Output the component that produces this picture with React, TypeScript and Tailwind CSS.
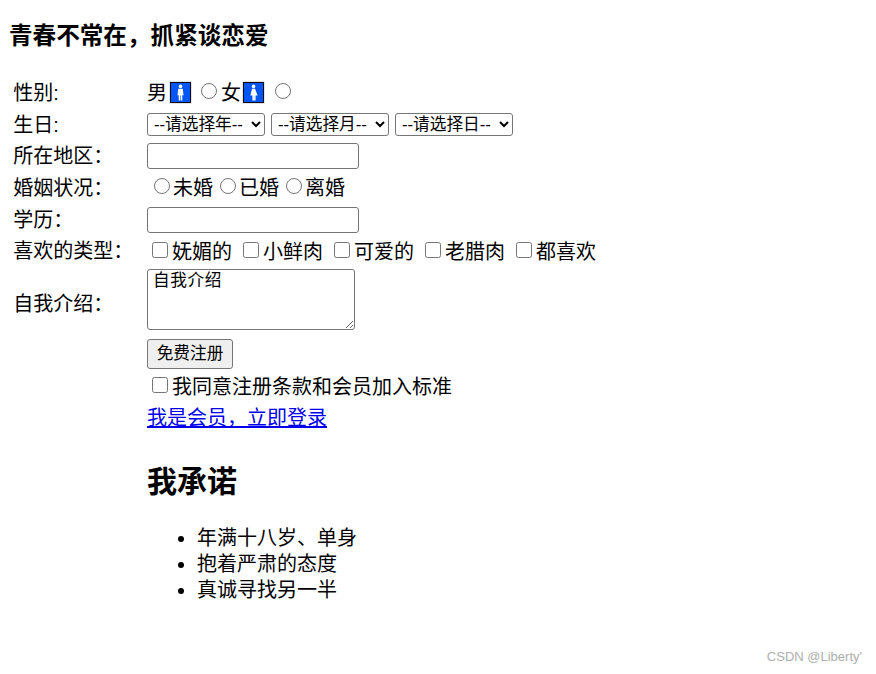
import React from 'react';

const inputClass = "h-[26px] w-[212px] rounded-[3px] border border-[#767676] bg-white px-[3px] text-[16.67px]";
const selectClass = "h-[23px] w-[118px] rounded-[3px] border border-[#767676] bg-white pl-[2px] text-[16.67px] leading-[20px]";
const radioClass = "ml-[7px] mr-[3px] h-4 w-4 align-[1px]";
const checkClass = "ml-[5px] mr-[4px] h-4 w-4 align-[1px]";

const GenderIcon = ({ woman }: { woman?: boolean }) => (
  <svg width="23" height="23" viewBox="0 0 23 23" className="inline-block align-[-4px]">
    <rect x="0.5" y="0.5" width="22" height="22" fill="#c8c8c8" />
    <rect x="1" y="1" width="21" height="21" fill="#0a0a14" />
    <rect x="2" y="2" width="19" height="19" fill="#0455f5" />
    <circle cx="11.5" cy="5.4" r="1.8" fill="#fff" />
    {woman ? (
      <path d="M10 7.8h3l2.6 6.7h-2v4.9h-1.5v-4.9h-.2v4.9h-1.5v-4.9h-2z" fill="#fff" />
    ) : (
      <path d="M9.2 7.8h4.6l.7 6.4h-1.2v5.2h-1.5v-5h-.6v5H9.7v-5.2H8.5z" fill="#fff" />
    )}
  </svg>
);

const Row = ({ label, labelClass, children }: { label?: string; labelClass?: string; children: React.ReactNode }) => (
  <tr>
    <td className={`w-[131.75px] p-[1.25px] align-middle ${labelClass ?? ''}`}>{label}</td>
    <td className="p-[1.25px] align-middle">{children}</td>
  </tr>
);

const likes = ['妩媚的', '小鲜肉', '可爱的', '老腊肉', '都喜欢'];
const promises = ['年满十八岁、单身', '抱着严肃的态度', '真诚寻找另一半'];

export default function App() {
  return (
    <div className="flex h-[674px] flex-col bg-white font-['Liberation_Sans','Noto_Sans_CJK_SC',sans-serif] text-[20px] leading-[26px] text-black">
      <h3 className="ml-[9px] mt-[21px] text-[23.6px] font-bold leading-[30px]">{'青春不常在\uFF0C抓紧谈恋爱'}</h3>
      <table className="ml-[10px] mt-[25px] border-separate border-spacing-[2.5px]">
        <tbody>
          <Row label="性别:">
            <div className="h-[27px] whitespace-nowrap pt-[1px]">
              男<span className="ml-[2px]"><GenderIcon /></span>
              <input type="radio" name="sex" className="ml-[9px] mr-[4px] h-4 w-4 align-[1px]" />
              女<span className="ml-[1px]"><GenderIcon woman /></span>
              <input type="radio" name="sex" className="ml-[10px] h-4 w-4 align-[1px]" />
            </div>
          </Row>
          <Row label="生日:" labelClass="pt-[2px]">
            <div className="flex h-[27px] items-center gap-[6px]">
              <select className={selectClass}><option>--请选择年--</option></select>
              <select className={selectClass}><option>--请选择月--</option></select>
              <select className={selectClass}><option>--请选择日--</option></select>
            </div>
          </Row>
          <Row label={'所在地区\uFF1A'} labelClass="pt-[2px]">
            <div className="flex h-[27px] items-center">
              <input type="text" className={inputClass} />
            </div>
          </Row>
          <Row label={'婚姻状况\uFF1A'}>
            <div className="h-[28px] whitespace-nowrap pt-[1px]">
              <input type="radio" name="marry" className={radioClass} />未婚
              <input type="radio" name="marry" className={radioClass} />已婚
              <input type="radio" name="marry" className={radioClass} />离婚
            </div>
          </Row>
          <Row label={'学历\uFF1A'} labelClass="pt-[2px]">
            <div className="flex h-[27px] items-center">
              <input type="text" className={inputClass} />
            </div>
          </Row>
          <Row label={'喜欢的类型\uFF1A'}>
            <div className="h-[27px] whitespace-nowrap pt-[1px]">
              {likes.map((like) => (
                <span key={like} className="mr-[6px]">
                  <input type="checkbox" className={checkClass} />
                  {like}
                </span>
              ))}
            </div>
          </Row>
          <Row label={'自我介绍\uFF1A'} labelClass="pt-[9px]">
            <textarea
              defaultValue="自我介绍"
              className="block h-[61px] w-[208px] rounded-[3px] border border-[#767676] bg-white px-[5px] pb-0 pt-[1px] text-[16.67px] leading-[20px] tracking-[0.6px]"
            />
          </Row>
          <Row>
            <button className="mb-[1px] mt-[4px] block h-[30px] w-[86px] rounded-[3px] border border-[#767676] bg-[#efefef] text-[16.67px]">免费注册</button>
          </Row>
          <Row>
            <div className="whitespace-nowrap">
              <input type="checkbox" className={checkClass} />
              我同意注册条款和会员加入标准
            </div>
          </Row>
          <Row>
            <a href="#" className="text-[#0000ee] underline">{'我是会员\uFF0C立即登录'}</a>
          </Row>
          <Row>
            <h2 className="mt-[27px] text-[30px] font-bold leading-[39px]">我承诺</h2>
            <ul className="mt-[23.5px] list-disc pl-[50px]">
              {promises.map((item) => (
                <li key={item}>{item}</li>
              ))}
            </ul>
          </Row>
        </tbody>
      </table>
      <div className="mr-[14px] mt-auto mb-[9px] text-right text-[13px] leading-[16px] text-[#aeaeae]">CSDN @Liberty'</div>
    </div>
  );
}
